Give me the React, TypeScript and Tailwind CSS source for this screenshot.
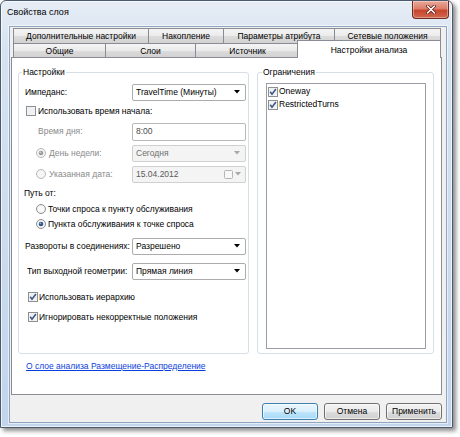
import React from "react";

function CheckBox({ checked, disabled }: { checked?: boolean; disabled?: boolean }) {
  return (
    <svg width="10" height="10" viewBox="0 0 10 10" className="shrink-0">
      <rect x="0.5" y="0.5" width="9" height="9" fill="#ffffff" stroke={disabled ? "#b8b8b8" : "#8e8f8f"} />
      <rect x="1.5" y="1.5" width="7" height="7" fill={disabled ? "#f0f0f0" : "#e3e5e8"} />
      <rect x="2" y="2" width="6" height="6" fill={disabled ? "#f4f4f4" : "#eef0f2"} />
      {checked && (
        <path d="M2.2 4.8 L4 7.3 L7.9 2" fill="none" stroke="#3c5487" strokeWidth="1.5" />
      )}
    </svg>
  );
}

function Radio({ checked, disabled }: { checked?: boolean; disabled?: boolean }) {
  return (
    <svg width="10" height="10" viewBox="0 0 10 10" className="shrink-0">
      <circle cx="5" cy="5" r="4.5" fill={disabled ? "#f2f2f2" : "#ececec"} stroke={disabled ? "#b8b8b8" : "#8e8f8f"} />
      <circle cx="5" cy="5" r="3.3" fill={disabled ? "#f6f6f6" : "#f8f8f8"} />
      {checked && <circle cx="5" cy="5" r="2.3" fill={disabled ? "#9a9a9a" : "#2d5285"} />}
      {checked && <circle cx="4.4" cy="4.3" r="0.9" fill={disabled ? "#d0d0d0" : "#8fb4e0"} />}
    </svg>
  );
}

function Arrow({ disabled }: { disabled?: boolean }) {
  return (
    <svg width="6" height="4" viewBox="0 0 6 4" className="shrink-0">
      <path d="M0 0 H6 L3 3.6 Z" fill={disabled ? "#a8a8a8" : "#000000"} />
    </svg>
  );
}

export default function App() {
  return (
    <div className="w-[460px] h-[437px] bg-white text-[8.5px] leading-none text-black font-['Liberation_Sans',Arial,sans-serif]">
      <div className="w-[453px] h-[428px] rounded-t-[6px] border border-[#4b5a6c] bg-[linear-gradient(180deg,#e6edf6_0%,#d6e2f0_12%,#c3d5eb_100%)] shadow-[3px_3px_4px_rgba(0,0,0,0.45),inset_0_0_0_1px_rgba(255,255,255,0.65)] flex flex-col">
        {/* Title bar */}
        <div className="h-[25px] flex items-start">
          <span className="pl-[6px] pt-[7px] text-[9px] text-black">Свойства слоя</span>
          <div className="ml-auto mr-[3px] w-[37px] h-[18px] rounded-b-[4px] border border-t-0 border-[#6e2a20] bg-[linear-gradient(180deg,#e9a99b_0%,#dc7e68_45%,#c8452e_55%,#d0674c_100%)] shadow-[inset_0_0_0_1px_rgba(255,255,255,0.35)] flex items-center justify-center">
            <svg width="10" height="9" viewBox="0 0 10 9">
              <path d="M1.5 1 L8.5 8 M8.5 1 L1.5 8" stroke="#5a1a12" strokeWidth="3" strokeLinecap="round" />
              <path d="M1.5 1 L8.5 8 M8.5 1 L1.5 8" stroke="#ffffff" strokeWidth="1.6" strokeLinecap="round" />
            </svg>
          </div>
        </div>

        {/* Client area */}
        <div className="ml-[8px] mr-[5px] h-[397px] border border-[#8fa5bf] bg-[#f0f0f0] flex flex-col shadow-[0_0_0_1px_rgba(255,255,255,0.55)]">
          {/* Tabs */}
          <div className="mt-[1px] pl-[3px] flex flex-col">
            <div className="flex h-[15px]">
              <div className="w-[136px] h-full border border-b-0 border-[#898c95] bg-[linear-gradient(180deg,#f4f4f4_0%,#ebebeb_50%,#dcdcdc_51%,#d2d2d2_100%)] flex items-center justify-center">Дополнительные настройки</div>
              <div className="w-[76px] -ml-px h-full border border-b-0 border-[#898c95] bg-[linear-gradient(180deg,#f4f4f4_0%,#ebebeb_50%,#dcdcdc_51%,#d2d2d2_100%)] flex items-center justify-center">Накопление</div>
              <div className="w-[112px] -ml-px h-full border border-b-0 border-[#898c95] bg-[linear-gradient(180deg,#f4f4f4_0%,#ebebeb_50%,#dcdcdc_51%,#d2d2d2_100%)] flex items-center justify-center">Параметры атрибута</div>
              <div className="w-[107px] -ml-px h-full border border-b-0 border-[#898c95] bg-[linear-gradient(180deg,#f4f4f4_0%,#ebebeb_50%,#dcdcdc_51%,#d2d2d2_100%)] flex items-center justify-center">Сетевые положения</div>
            </div>
            <div className="flex items-end h-[14px]">
              <div className="w-[93px] h-full border border-b-0 border-[#898c95] bg-[linear-gradient(180deg,#f4f4f4_0%,#ebebeb_50%,#dcdcdc_51%,#d2d2d2_100%)] flex items-center justify-center pt-px">Общие</div>
              <div className="w-[91px] -ml-px h-full border border-b-0 border-[#898c95] bg-[linear-gradient(180deg,#f4f4f4_0%,#ebebeb_50%,#dcdcdc_51%,#d2d2d2_100%)] flex items-center justify-center pt-px">Слои</div>
              <div className="w-[105px] -ml-px h-full border border-b-0 border-[#898c95] bg-[linear-gradient(180deg,#f4f4f4_0%,#ebebeb_50%,#dcdcdc_51%,#d2d2d2_100%)] flex items-center justify-center pt-px">Источник</div>
              <div className="relative z-10 w-[144px] -ml-[3px] h-[18px] -mb-px border border-b-0 border-[#898c95] bg-white flex items-start justify-center pt-[5px]">Настройки анализа</div>
            </div>
          </div>

          {/* Panel */}
          <div className="ml-px w-[431px] h-[338px] border border-[#898c95] bg-white flex flex-col">
            <div className="flex mt-[14px] ml-[6px] gap-[8px]">
              {/* Left group */}
              <div className="relative w-[231px] h-[282px] border border-[#d5dfe5] rounded-[3px] flex flex-col pt-[10px]">
                <span className="absolute -top-[5px] left-[3px] px-[1px] bg-white">Настройки</span>

                <div className="h-[18px] flex items-center pl-[6px] pr-[2px]">
                  <span className="flex-1">Импеданс:</span>
                  <div className="w-[114px] h-[17px] rounded-[2px] border border-[#acacac] bg-white flex items-center pl-[3px] pr-[5px]">
                    <span className="flex-1">TravelTime (Минуты)</span>
                    <Arrow />
                  </div>
                </div>

                <div className="h-[20px] flex items-center pl-[7px] gap-[2px]">
                  <CheckBox />
                  <span>Использовать время начала:</span>
                </div>

                <div className="h-[21px] flex items-center pl-[19px] pr-[2px]">
                  <span className="flex-1 text-[#8a8a8a]">Время дня:</span>
                  <div className="w-[114px] h-[18px] rounded-[2px] border border-[#b9b9b9] bg-white flex items-center pl-[3px] text-[#4a4a4a]">8:00</div>
                </div>

                <div className="h-[22px] flex items-center pl-[17px] pr-[2px]">
                  <Radio checked disabled />
                  <span className="flex-1 ml-[3px] text-[#8a8a8a]">День недели:</span>
                  <div className="w-[114px] h-[17px] rounded-[2px] border border-[#d0d0d0] bg-[#f4f4f4] flex items-center pl-[3px] pr-[5px] text-[#6d6d6d]">
                    <span className="flex-1">Сегодня</span>
                    <Arrow disabled />
                  </div>
                </div>

                <div className="h-[20px] flex items-center pl-[17px] pr-[2px]">
                  <Radio disabled />
                  <span className="flex-1 ml-[3px] text-[#8a8a8a]">Указанная дата:</span>
                  <div className="w-[114px] h-[17px] rounded-[2px] border border-[#d0d0d0] bg-[#f4f4f4] flex items-center pl-[3px] pr-[4px] text-[#5a5a5a]">
                    <span className="flex-1">15.04.2012</span>
                    <svg width="9" height="9" viewBox="0 0 9 9" className="shrink-0">
                      <rect x="0.5" y="0.5" width="8" height="8" rx="1" fill="#f8f8f8" stroke="#b5b5b5" />
                    </svg>
                    <div className="ml-[2px]"><Arrow disabled /></div>
                  </div>
                </div>

                <div className="h-[18px] flex items-center pl-[5px]">Путь от:</div>

                <div className="h-[14px] flex items-center pl-[17px] gap-[2px]">
                  <Radio />
                  <span>Точки спроса к пункту обслуживания</span>
                </div>
                <div className="h-[16px] flex items-center pl-[17px] gap-[2px]">
                  <Radio checked />
                  <span>Пункта обслуживания к точке спроса</span>
                </div>

                <div className="h-[28px] flex items-center pl-[6px] pr-[2px]">
                  <span className="flex-1">Развороты в соединениях:</span>
                  <div className="w-[114px] h-[17px] rounded-[2px] border border-[#acacac] bg-white flex items-center pl-[3px] pr-[5px]">
                    <span className="flex-1">Разрешено</span>
                    <Arrow />
                  </div>
                </div>

                <div className="h-[22px] flex items-center pl-[8px] pr-[2px]">
                  <span className="flex-1">Тип выходной геометрии:</span>
                  <div className="w-[114px] h-[17px] rounded-[2px] border border-[#acacac] bg-white flex items-center pl-[3px] pr-[5px]">
                    <span className="flex-1">Прямая линия</span>
                    <Arrow />
                  </div>
                </div>

                <div className="mt-[5px] h-[20px] flex items-center pl-[9px] gap-[1px]">
                  <CheckBox checked />
                  <span>Использовать иерархию</span>
                </div>
                <div className="h-[20px] flex items-center pl-[9px] gap-[1px]">
                  <CheckBox checked />
                  <span>Игнорировать некорректные положения</span>
                </div>
              </div>

              {/* Right group */}
              <div className="relative w-[177px] h-[282px] border border-[#d5dfe5] rounded-[3px] pt-[10px] pl-[8px]">
                <span className="absolute -top-[5px] left-[4px] px-[1px] bg-white">Ограничения</span>
                <div className="w-[160px] h-[266px] border border-[#9a9da3] bg-white flex flex-col pt-px pl-px">
                  <div className="h-[13px] flex items-center gap-[1px]">
                    <CheckBox checked />
                    <span>Oneway</span>
                  </div>
                  <div className="h-[13px] flex items-center gap-[1px]">
                    <CheckBox checked />
                    <span>RestrictedTurns</span>
                  </div>
                </div>
              </div>
            </div>

            <div className="mt-[8px] pl-[14px]">
              <span className="text-[#0a3ee0] underline">О слое анализа Размещение-Распределение</span>
            </div>
          </div>

          {/* Buttons */}
          <div className="mt-[8px] pr-[4px] flex justify-end gap-[6px]">
            <div className="w-[56px] h-[17px] rounded-[3px] border border-[#3c7fb1] bg-[linear-gradient(180deg,#eaf6fd_0%,#d9f0fc_50%,#bee6fd_51%,#a7d9f5_100%)] shadow-[inset_0_0_0_1px_rgba(255,255,255,0.6)] flex items-center justify-center">OK</div>
            <div className="w-[56px] h-[17px] rounded-[3px] border border-[#707070] bg-[linear-gradient(180deg,#f2f2f2_0%,#ebebeb_50%,#dddddd_51%,#cfcfcf_100%)] shadow-[inset_0_0_0_1px_rgba(255,255,255,0.6)] flex items-center justify-center">Отмена</div>
            <div className="w-[56px] h-[17px] rounded-[3px] border border-[#707070] bg-[linear-gradient(180deg,#f2f2f2_0%,#ebebeb_50%,#dddddd_51%,#cfcfcf_100%)] shadow-[inset_0_0_0_1px_rgba(255,255,255,0.6)] flex items-center justify-center">Применить</div>
          </div>
        </div>
      </div>
    </div>
  );
}
